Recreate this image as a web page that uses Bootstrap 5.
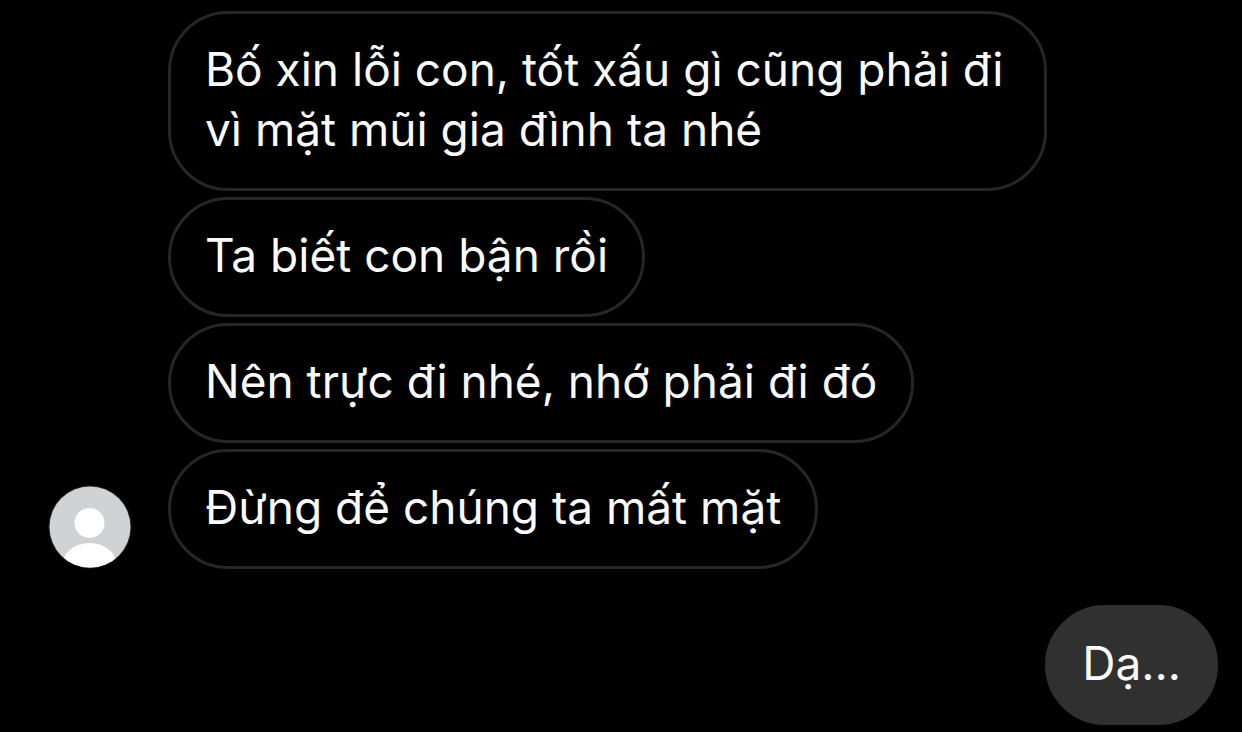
<!DOCTYPE html>
<html lang="vi" data-bs-theme="dark">
<head>
<meta charset="utf-8">
<meta name="viewport" content="width=device-width, initial-scale=1">
<title>Tin nhắn</title>
<link href="https://cdn.jsdelivr.net/npm/bootstrap@5.3.0/dist/css/bootstrap.min.css" rel="stylesheet">
<style>
  body { background: #000; color: #fafafa; font-family: Inter, "Liberation Sans", sans-serif; font-size: 46px; line-height: 60px; }
  .chat { padding: 11px 24px 7px 48px; }
  .bubble { border: 3px solid #262626; border-radius: 60px; padding: 25px 34px 29px; max-width: 879px; }
  .bubble-own { background: #303030; border-color: #303030; }
  .thread { gap: 6px; }
  .sender { gap: 36px; }
  .avatar { width: 84px; height: 84px; }
  .reply { margin-top: 36px; }
</style>
</head>
<body>
<main class="chat d-flex flex-column">
  <section class="sender d-flex align-items-end">
    <svg class="avatar flex-shrink-0" viewBox="0 0 84 84" role="img" aria-label="Ảnh đại diện">
      <defs><clipPath id="disc"><circle cx="42" cy="42" r="40.5"/></clipPath></defs>
      <circle cx="42" cy="42" r="41.5" fill="#262626"/>
      <g clip-path="url(#disc)">
        <rect width="84" height="84" fill="#d0d2d4"/>
        <circle cx="41.5" cy="38" r="15" fill="#fff"/>
        <ellipse cx="41.5" cy="82" rx="28" ry="24" fill="#fff"/>
      </g>
    </svg>
    <div class="thread d-flex flex-column align-items-start">
      <div class="bubble">Bố xin lỗi con, tốt xấu gì cũng phải đi vì mặt mũi gia đình ta nhé</div>
      <div class="bubble">Ta biết con bận rồi</div>
      <div class="bubble">Nên trực đi nhé, nhớ phải đi đó</div>
      <div class="bubble">Đừng để chúng ta mất mặt</div>
    </div>
  </section>
  <div class="reply bubble bubble-own align-self-end">Dạ...</div>
</main>
<script src="https://cdn.jsdelivr.net/npm/bootstrap@5.3.0/dist/js/bootstrap.bundle.min.js"></script>
</body>
</html>
